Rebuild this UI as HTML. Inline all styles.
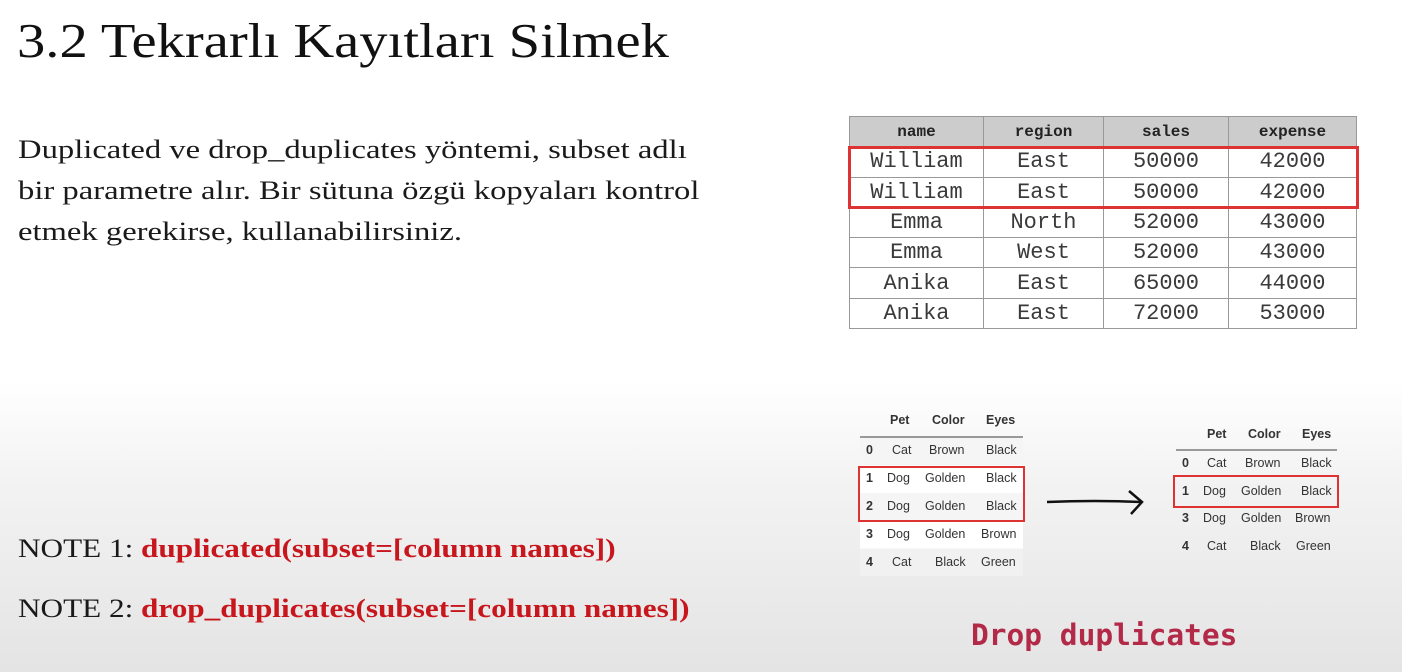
<!DOCTYPE html>
<html><head><meta charset="utf-8"><style>
*{margin:0;padding:0;box-sizing:border-box}
body{width:1402px;height:672px;overflow:hidden;position:relative;background:linear-gradient(to bottom,#fff 0px,#fff 380px,#f3f3f3 480px,#e4e4e4 672px);font-family:"Liberation Serif",serif;color:#1a1a1a}
.a{position:absolute;white-space:nowrap}
.t1{border-collapse:collapse;position:absolute;left:849px;top:116px;font-family:"Liberation Mono",monospace;background:#fff}
.t1 td,.t1 th{border:1px solid #999;height:30.3px;text-align:center;font-size:22px;color:#3a3a3a;font-weight:normal}
.t1 th{background:#ccc;font-weight:bold;font-size:16px;color:#222}
.s{position:absolute;font-family:"Liberation Sans",sans-serif;font-size:12.5px;color:#333}
.s span{position:absolute}
.box{position:absolute;border:2px solid #d33}
</style></head><body>
<div class="a" style="left:17px;top:12px;font-size:49px;color:#111;transform:scaleX(1.155);transform-origin:left">3.2 Tekrarlı Kayıtları Silmek</div>
<div class="a" style="left:18px;top:129px;font-size:26px;line-height:41px;transform:scaleX(1.255);transform-origin:left">Duplicated ve drop_duplicates yöntemi, subset adlı<br>bir parametre alır. Bir sütuna özgü kopyaları kontrol<br>etmek gerekirse, kullanabilirsiniz.</div>
<div class="a" style="left:18px;top:534px;font-size:26px;transform:scaleX(1.2);transform-origin:left">NOTE 1: <b style="color:#c8161d">duplicated(subset=[column names])</b></div>
<div class="a" style="left:18px;top:594px;font-size:26px;transform:scaleX(1.2);transform-origin:left">NOTE 2: <b style="color:#c8161d">drop_duplicates(subset=[column names])</b></div>

<table class="t1">
<tr><th style="width:134px">name</th><th style="width:120px">region</th><th style="width:125px">sales</th><th style="width:128px">expense</th></tr>
<tr><td>William</td><td>East</td><td>50000</td><td>42000</td></tr>
<tr><td>William</td><td>East</td><td>50000</td><td>42000</td></tr>
<tr><td>Emma</td><td>North</td><td>52000</td><td>43000</td></tr>
<tr><td>Emma</td><td>West</td><td>52000</td><td>43000</td></tr>
<tr><td>Anika</td><td>East</td><td>65000</td><td>44000</td></tr>
<tr><td>Anika</td><td>East</td><td>72000</td><td>53000</td></tr>
</table>
<div class="box" style="left:848px;top:146px;width:511px;height:63px;border-width:3px"></div>

<div class="a" style="left:860px;top:436px;width:163px;height:2px;background:#999"></div>
<div class="a" style="left:860px;top:438px;width:163px;height:138px;background:linear-gradient(#f5f5f5 0 20%,#fff 20% 40%,#f5f5f5 40% 60%,#fff 60% 80%,#f1f1f1 80%)"></div>
<div class="s" style="left:0;top:0">
<span style="left:890px;top:413px;font-weight:bold">Pet</span><span style="left:932px;top:413px;font-weight:bold">Color</span><span style="left:986px;top:413px;font-weight:bold">Eyes</span>
<span style="left:866px;top:443px;font-weight:bold">0</span><span style="left:892px;top:443px">Cat</span><span style="left:929px;top:443px">Brown</span><span style="left:986px;top:443px">Black</span>
<span style="left:866px;top:471px;font-weight:bold">1</span><span style="left:887px;top:471px">Dog</span><span style="left:925px;top:471px">Golden</span><span style="left:986px;top:471px">Black</span>
<span style="left:866px;top:499px;font-weight:bold">2</span><span style="left:887px;top:499px">Dog</span><span style="left:925px;top:499px">Golden</span><span style="left:986px;top:499px">Black</span>
<span style="left:866px;top:527px;font-weight:bold">3</span><span style="left:887px;top:527px">Dog</span><span style="left:925px;top:527px">Golden</span><span style="left:981px;top:527px">Brown</span>
<span style="left:866px;top:555px;font-weight:bold">4</span><span style="left:892px;top:555px">Cat</span><span style="left:935px;top:555px">Black</span><span style="left:981px;top:555px">Green</span>
<span style="left:1207px;top:427px;font-weight:bold">Pet</span><span style="left:1248px;top:427px;font-weight:bold">Color</span><span style="left:1302px;top:427px;font-weight:bold">Eyes</span>
<span style="left:1182px;top:456px;font-weight:bold">0</span><span style="left:1207px;top:456px">Cat</span><span style="left:1245px;top:456px">Brown</span><span style="left:1301px;top:456px">Black</span>
<span style="left:1182px;top:484px;font-weight:bold">1</span><span style="left:1203px;top:484px">Dog</span><span style="left:1241px;top:484px">Golden</span><span style="left:1301px;top:484px">Black</span>
<span style="left:1182px;top:511px;font-weight:bold">3</span><span style="left:1203px;top:511px">Dog</span><span style="left:1241px;top:511px">Golden</span><span style="left:1295px;top:511px">Brown</span>
<span style="left:1182px;top:539px;font-weight:bold">4</span><span style="left:1207px;top:539px">Cat</span><span style="left:1250px;top:539px">Black</span><span style="left:1296px;top:539px">Green</span>
</div>
<div class="a" style="left:1176px;top:449px;width:161px;height:2px;background:#999"></div>
<div class="box" style="left:858px;top:466px;width:167px;height:56px"></div>
<div class="box" style="left:1173px;top:475px;width:166px;height:33px"></div>
<svg class="a" style="left:1045px;top:488px" width="102" height="30"><path d="M2 14 Q50 12 96 14" stroke="#111" stroke-width="2.5" fill="none"/><path d="M84 3 L97 14 L86 26" stroke="#111" stroke-width="2.5" fill="none"/></svg>
<div class="a" style="left:971px;top:618px;font-family:'DejaVu Sans Mono','Liberation Mono',monospace;font-weight:bold;font-size:29.5px;color:#b32a48">Drop duplicates</div>
</body></html>
